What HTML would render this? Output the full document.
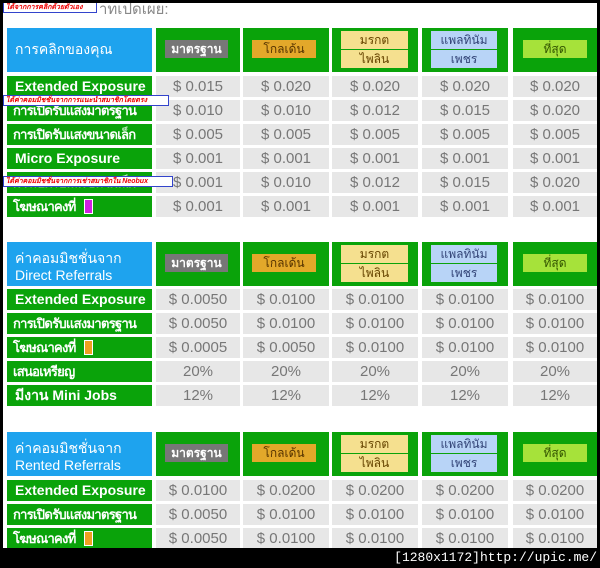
<!DOCTYPE html>
<html><head><meta charset="utf-8">
<style>
*{margin:0;padding:0;box-sizing:border-box}
html,body{width:600px;height:568px;overflow:hidden;background:#000;font-family:"Liberation Sans","DejaVu Sans",sans-serif}
#pg{position:absolute;left:3px;top:3px;width:594px;height:545px;background:#fff;overflow:hidden}
.a{position:absolute}
.lab{position:absolute;left:4px;width:145px;background:#0aa30a;color:#fff;font-weight:bold;font-size:14px;line-height:21px;height:21px;padding-left:8px;white-space:nowrap;overflow:hidden}
.th{font-size:13px;letter-spacing:-0.7px;padding-left:6px}
.hb{position:absolute;left:4px;width:145px;height:44px;background:#1ea3ee;color:#fff;font-size:14px;padding:8px 0 0 8px;line-height:17px}
.hb.one{padding-top:13px}
.hc{position:absolute;height:44px;background:#0aa30a}
.c{position:absolute;height:21px;background:#e7e7e7;color:#777;font-size:15px;line-height:21px;text-align:center}
.bd{position:absolute;font-size:12px;text-align:center;line-height:18px;height:18px}
.g{background:#777;color:#fff;font-weight:bold}
.o{background:#e3a82a;color:#553300}
.y{background:#f5e08f;color:#664400}
.p{background:#b8d4f7;color:#334477}
.u{background:#a6e23a;color:#335500}
.tag{position:absolute;left:0;background:#fff;border:1px solid #3344cc;color:#e00;font-size:7px;font-style:italic;font-weight:bold;height:11px;line-height:9px;padding:0 2px;white-space:nowrap}
.sq{display:inline-block;width:9px;height:15px;vertical-align:-3px;margin-left:8px;border:1px solid #fff}
</style></head><body>
<div id="pg">
<div class="a" style="left:96px;top:-6px;font-size:15px;color:#888">าทเปดเผย:</div>

<div class="hb one" style="top:25px">การคลิกของคุณ</div>
<div class="hc" style="left:153px;width:84px;top:25px"><div class="bd g" style="left:9px;top:12px;width:63px">มาตรฐาน</div></div>
<div class="hc" style="left:240px;width:86px;top:25px"><div class="bd o" style="left:9px;top:12px;width:64px">โกลเด้น</div></div>
<div class="hc" style="left:329px;width:86px;top:25px"><div class="bd y" style="left:9px;top:3px;width:67px">มรกต</div><div class="bd y" style="left:9px;top:22px;width:67px">ไพลิน</div></div>
<div class="hc" style="left:419px;width:86px;top:25px"><div class="bd p" style="left:9px;top:3px;width:66px">แพลทินัม</div><div class="bd p" style="left:9px;top:22px;width:66px">เพชร</div></div>
<div class="hc" style="left:510px;width:90px;top:25px"><div class="bd u" style="left:10px;top:12px;width:64px">ที่สุด</div></div>

<div class="lab" style="top:73px">Extended Exposure</div>
<div class="lab th" style="top:97px">การเปิดรับแสงมาตรฐาน</div>
<div class="lab th" style="top:121px">การเปิดรับแสงขนาดเล็ก</div>
<div class="lab" style="top:145px">Micro Exposure</div>
<div class="lab th" style="top:169px">การเปิดรับแสงขนาดเล็ก</div>
<div class="lab th" style="top:193px">โฆษณาคงที่<span class="sq" style="background:#d020e0"></span></div>

<div class="c" style="left:153px;width:84px;top:73px">$ 0.015</div><div class="c" style="left:240px;width:86px;top:73px">$ 0.020</div><div class="c" style="left:329px;width:86px;top:73px">$ 0.020</div><div class="c" style="left:419px;width:86px;top:73px">$ 0.020</div><div class="c" style="left:510px;width:90px;top:73px;text-indent:-6px">$ 0.020</div>
<div class="c" style="left:153px;width:84px;top:97px">$ 0.010</div><div class="c" style="left:240px;width:86px;top:97px">$ 0.010</div><div class="c" style="left:329px;width:86px;top:97px">$ 0.012</div><div class="c" style="left:419px;width:86px;top:97px">$ 0.015</div><div class="c" style="left:510px;width:90px;top:97px;text-indent:-6px">$ 0.020</div>
<div class="c" style="left:153px;width:84px;top:121px">$ 0.005</div><div class="c" style="left:240px;width:86px;top:121px">$ 0.005</div><div class="c" style="left:329px;width:86px;top:121px">$ 0.005</div><div class="c" style="left:419px;width:86px;top:121px">$ 0.005</div><div class="c" style="left:510px;width:90px;top:121px;text-indent:-6px">$ 0.005</div>
<div class="c" style="left:153px;width:84px;top:145px">$ 0.001</div><div class="c" style="left:240px;width:86px;top:145px">$ 0.001</div><div class="c" style="left:329px;width:86px;top:145px">$ 0.001</div><div class="c" style="left:419px;width:86px;top:145px">$ 0.001</div><div class="c" style="left:510px;width:90px;top:145px;text-indent:-6px">$ 0.001</div>
<div class="c" style="left:153px;width:84px;top:169px">$ 0.001</div><div class="c" style="left:240px;width:86px;top:169px">$ 0.010</div><div class="c" style="left:329px;width:86px;top:169px">$ 0.012</div><div class="c" style="left:419px;width:86px;top:169px">$ 0.015</div><div class="c" style="left:510px;width:90px;top:169px;text-indent:-6px">$ 0.020</div>
<div class="c" style="left:153px;width:84px;top:193px">$ 0.001</div><div class="c" style="left:240px;width:86px;top:193px">$ 0.001</div><div class="c" style="left:329px;width:86px;top:193px">$ 0.001</div><div class="c" style="left:419px;width:86px;top:193px">$ 0.001</div><div class="c" style="left:510px;width:90px;top:193px;text-indent:-6px">$ 0.001</div>

<div class="hb" style="top:239px">ค่าคอมมิชชั่นจาก<br>Direct Referrals</div>
<div class="hc" style="left:153px;width:84px;top:239px"><div class="bd g" style="left:9px;top:12px;width:63px">มาตรฐาน</div></div>
<div class="hc" style="left:240px;width:86px;top:239px"><div class="bd o" style="left:9px;top:12px;width:64px">โกลเด้น</div></div>
<div class="hc" style="left:329px;width:86px;top:239px"><div class="bd y" style="left:9px;top:3px;width:67px">มรกต</div><div class="bd y" style="left:9px;top:22px;width:67px">ไพลิน</div></div>
<div class="hc" style="left:419px;width:86px;top:239px"><div class="bd p" style="left:9px;top:3px;width:66px">แพลทินัม</div><div class="bd p" style="left:9px;top:22px;width:66px">เพชร</div></div>
<div class="hc" style="left:510px;width:90px;top:239px"><div class="bd u" style="left:10px;top:12px;width:64px">ที่สุด</div></div>

<div class="lab" style="top:286px">Extended Exposure</div>
<div class="lab th" style="top:310px">การเปิดรับแสงมาตรฐาน</div>
<div class="lab th" style="top:334px">โฆษณาคงที่<span class="sq" style="background:#f0a020"></span></div>
<div class="lab th" style="top:358px">เสนอเหรียญ</div>
<div class="lab" style="top:382px">มีงาน Mini Jobs</div>

<div class="c" style="left:153px;width:84px;top:286px">$ 0.0050</div><div class="c" style="left:240px;width:86px;top:286px">$ 0.0100</div><div class="c" style="left:329px;width:86px;top:286px">$ 0.0100</div><div class="c" style="left:419px;width:86px;top:286px">$ 0.0100</div><div class="c" style="left:510px;width:90px;top:286px;text-indent:-6px">$ 0.0100</div>
<div class="c" style="left:153px;width:84px;top:310px">$ 0.0050</div><div class="c" style="left:240px;width:86px;top:310px">$ 0.0100</div><div class="c" style="left:329px;width:86px;top:310px">$ 0.0100</div><div class="c" style="left:419px;width:86px;top:310px">$ 0.0100</div><div class="c" style="left:510px;width:90px;top:310px;text-indent:-6px">$ 0.0100</div>
<div class="c" style="left:153px;width:84px;top:334px">$ 0.0005</div><div class="c" style="left:240px;width:86px;top:334px">$ 0.0050</div><div class="c" style="left:329px;width:86px;top:334px">$ 0.0100</div><div class="c" style="left:419px;width:86px;top:334px">$ 0.0100</div><div class="c" style="left:510px;width:90px;top:334px;text-indent:-6px">$ 0.0100</div>
<div class="c" style="left:153px;width:84px;top:358px">20%</div><div class="c" style="left:240px;width:86px;top:358px">20%</div><div class="c" style="left:329px;width:86px;top:358px">20%</div><div class="c" style="left:419px;width:86px;top:358px">20%</div><div class="c" style="left:510px;width:90px;top:358px;text-indent:-6px">20%</div>
<div class="c" style="left:153px;width:84px;top:382px">12%</div><div class="c" style="left:240px;width:86px;top:382px">12%</div><div class="c" style="left:329px;width:86px;top:382px">12%</div><div class="c" style="left:419px;width:86px;top:382px">12%</div><div class="c" style="left:510px;width:90px;top:382px;text-indent:-6px">12%</div>

<div class="hb" style="top:429px">ค่าคอมมิชชั่นจาก<br>Rented Referrals</div>
<div class="hc" style="left:153px;width:84px;top:429px"><div class="bd g" style="left:9px;top:12px;width:63px">มาตรฐาน</div></div>
<div class="hc" style="left:240px;width:86px;top:429px"><div class="bd o" style="left:9px;top:12px;width:64px">โกลเด้น</div></div>
<div class="hc" style="left:329px;width:86px;top:429px"><div class="bd y" style="left:9px;top:3px;width:67px">มรกต</div><div class="bd y" style="left:9px;top:22px;width:67px">ไพลิน</div></div>
<div class="hc" style="left:419px;width:86px;top:429px"><div class="bd p" style="left:9px;top:3px;width:66px">แพลทินัม</div><div class="bd p" style="left:9px;top:22px;width:66px">เพชร</div></div>
<div class="hc" style="left:510px;width:90px;top:429px"><div class="bd u" style="left:10px;top:12px;width:64px">ที่สุด</div></div>

<div class="lab" style="top:477px">Extended Exposure</div>
<div class="lab th" style="top:501px">การเปิดรับแสงมาตรฐาน</div>
<div class="lab th" style="top:525px">โฆษณาคงที่<span class="sq" style="background:#f0a020"></span></div>

<div class="c" style="left:153px;width:84px;top:477px">$ 0.0100</div><div class="c" style="left:240px;width:86px;top:477px">$ 0.0200</div><div class="c" style="left:329px;width:86px;top:477px">$ 0.0200</div><div class="c" style="left:419px;width:86px;top:477px">$ 0.0200</div><div class="c" style="left:510px;width:90px;top:477px;text-indent:-6px">$ 0.0200</div>
<div class="c" style="left:153px;width:84px;top:501px">$ 0.0050</div><div class="c" style="left:240px;width:86px;top:501px">$ 0.0100</div><div class="c" style="left:329px;width:86px;top:501px">$ 0.0100</div><div class="c" style="left:419px;width:86px;top:501px">$ 0.0100</div><div class="c" style="left:510px;width:90px;top:501px;text-indent:-6px">$ 0.0100</div>
<div class="c" style="left:153px;width:84px;top:525px">$ 0.0050</div><div class="c" style="left:240px;width:86px;top:525px">$ 0.0100</div><div class="c" style="left:329px;width:86px;top:525px">$ 0.0100</div><div class="c" style="left:419px;width:86px;top:525px">$ 0.0100</div><div class="c" style="left:510px;width:90px;top:525px;text-indent:-6px">$ 0.0100</div>

<div class="tag" style="top:-1px;width:94px">ได้จากการคลิกด้วยตัวเอง</div>
<div class="tag" style="top:92px;width:166px">ได้ค่าคอมมิชชั่นจากการแนะนำสมาชิกโดยตรง</div>
<div class="tag" style="top:173px;width:170px">ได้ค่าคอมมิชชั่นจากการเช่าสมาชิกใน Neobux</div>
</div>
<div class="a" style="right:3px;top:549px;color:#fff;font-family:'Liberation Mono',monospace;font-size:13px;line-height:18px">[1280x1172]http://upic.me/</div>
</body></html>
